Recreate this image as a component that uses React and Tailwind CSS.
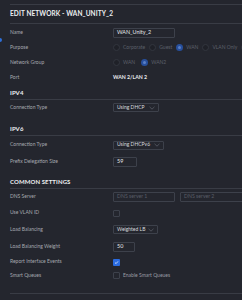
import React from "react";

const font = { fontFamily: "Lato, 'Open Sans', sans-serif" };

function Radio({ checked, label }) {
  return (
    <div className="flex items-center">
      {checked ? (
        <span className="w-[7px] h-[7px] rounded-full bg-[#274f9c] flex items-center justify-center shrink-0">
          <span className="w-[3px] h-[3px] rounded-full bg-[#5b7fc4]" />
        </span>
      ) : (
        <span className="w-[7px] h-[7px] rounded-full border border-[#33363f] bg-[#1f2128] shrink-0" />
      )}
      <span className="ml-[3px] mr-[4px] text-[5px] text-[#5c606a] whitespace-nowrap">{label}</span>
    </div>
  );
}

function Row({ label, h, children }) {
  return (
    <div className={`flex items-center ${h}`}>
      <div className="w-[103px] shrink-0 text-[5px] text-[#a6a9b0] whitespace-nowrap">{label}</div>
      <div className="flex items-center">{children}</div>
    </div>
  );
}

function Chevron() {
  return (
    <svg width="6" height="4" viewBox="0 0 6 4" className="shrink-0">
      <path d="M0.5 0.8 L3 3.2 L5.5 0.8" fill="none" stroke="#6b6f79" strokeWidth="0.6" />
    </svg>
  );
}

function Select({ value, w }) {
  return (
    <div className={`${w} h-[9px] border border-[#3d414b] rounded-[1px] flex items-center justify-between pl-[3px] pr-[3px]`}>
      <span className="text-[5px] text-[#d8dadf] whitespace-nowrap">{value}</span>
      <Chevron />
    </div>
  );
}

function Input({ value, w, placeholder }) {
  return (
    <div className={`${w} h-[10px] border border-[#3d414b] rounded-[1px] flex items-center pl-[3px] shrink-0`}>
      {value ? (
        <span className="text-[5.4px] text-[#e4e6ea] whitespace-nowrap">{value}</span>
      ) : (
        <span className="text-[5.2px] text-[#5a5e68] whitespace-nowrap">{placeholder}</span>
      )}
    </div>
  );
}

function Header({ title, h, pt }) {
  return (
    <div className={`flex items-center ${h} ${pt} border-b border-[#393c45]`}>
      <span className="text-[6px] font-bold text-[#eceef1] tracking-[0.1px]">{title}</span>
    </div>
  );
}

export default function App() {
  return (
    <div className="w-[242px] h-[300px] bg-[#24262e] overflow-hidden relative" style={font}>
      <div className="absolute left-[-2px] top-[38px] w-[4px] h-[4px] rounded-full bg-[#2f6fd8]" />
      <div className="pl-[10px] pt-[4px]">
        <div className="h-px bg-[#393c45]" />
        <div className="flex items-center h-[19px] border-b border-[#393c45]">
          <span className="text-[6.5px] font-bold text-[#eceef1] tracking-[0.1px]">EDIT NETWORK - WAN_UNITY_2</span>
        </div>
        <div className="h-px" />
        <Row label="Name" h="h-[15px]">
          <Input value="WAN_Unity_2" w="w-[62px]" />
        </Row>
        <Row label="Purpose" h="h-[15px]">
          <div className="flex items-center whitespace-nowrap">
            <Radio label="Corporate" />
            <Radio label="Guest" />
            <Radio checked label="WAN" />
            <Radio label="VLAN Only" />
            <Radio label="" />
          </div>
        </Row>
        <Row label="Network Group" h="h-[15px]">
          <div className="flex items-center whitespace-nowrap">
            <span className="mr-[2px]"><Radio label="WAN" /></span>
            <Radio checked label="WAN2" />
          </div>
        </Row>
        <Row label="Port" h="h-[15px]">
          <span className="text-[5.2px] font-bold text-[#e8eaee] whitespace-nowrap">WAN 2/LAN 2</span>
        </Row>
        <Header title="IPV4" h="h-[15px]" pt="" />
        <Row label="Connection Type" h="h-[15px]">
          <Select value="Using DHCP" w="w-[46px]" />
        </Row>
        <Header title="IPV6" h="h-[21px]" pt="pt-[6px]" />
        <Row label="Connection Type" h="h-[18px]">
          <Select value="Using DHCPv6" w="w-[51px]" />
        </Row>
        <Row label="Prefix Delegation Size" h="h-[15px]">
          <Input value="59" w="w-[24px]" />
        </Row>
        <div className="flex items-center h-[20px] pt-[6px] border-b border-[#393c45]">
          <span className="text-[6px] font-bold text-[#eceef1] tracking-[0.1px]">COMMON SETTINGS</span>
        </div>
        <Row label="DNS Server" h="h-[16px]">
          <div className="flex items-center gap-[5px]">
            <Input placeholder="DNS server 1" w="w-[62px]" />
            <Input placeholder="DNS server 2" w="w-[70px]" />
          </div>
        </Row>
        <Row label="Use VLAN ID" h="h-[16px]">
          <div className="flex items-center">
            <span className="w-[7px] h-[7px] border border-[#3d414b] rounded-[1px] shrink-0" />
          </div>
        </Row>
        <Row label="Load Balancing" h="h-[17px]">
          <Select value="Weighted LB" w="w-[45px]" />
        </Row>
        <Row label="Load Balancing Weight" h="h-[17px]">
          <Input value="50" w="w-[22px]" />
        </Row>
        <Row label="Report Interface Events" h="h-[14px]">
          <span className="w-[7px] h-[7px] rounded-[1px] bg-[#2a6be0] flex items-center justify-center shrink-0">
            <svg width="5" height="5" viewBox="0 0 5 5">
              <path d="M1 2.6 L2.1 3.6 L4 1.4" fill="none" stroke="#ffffff" strokeWidth="0.7" />
            </svg>
          </span>
        </Row>
        <Row label="Smart Queues" h="h-[13px]">
          <div className="flex items-center">
            <span className="w-[7px] h-[7px] border border-[#3d414b] rounded-[1px] shrink-0" />
            <span className="ml-[3px] text-[5px] text-[#9a9da5] whitespace-nowrap">Enable Smart Queues</span>
          </div>
        </Row>
        <div className="h-[11px]" />
        <div className="h-px bg-[#393c45]" />
      </div>
    </div>
  );
}
